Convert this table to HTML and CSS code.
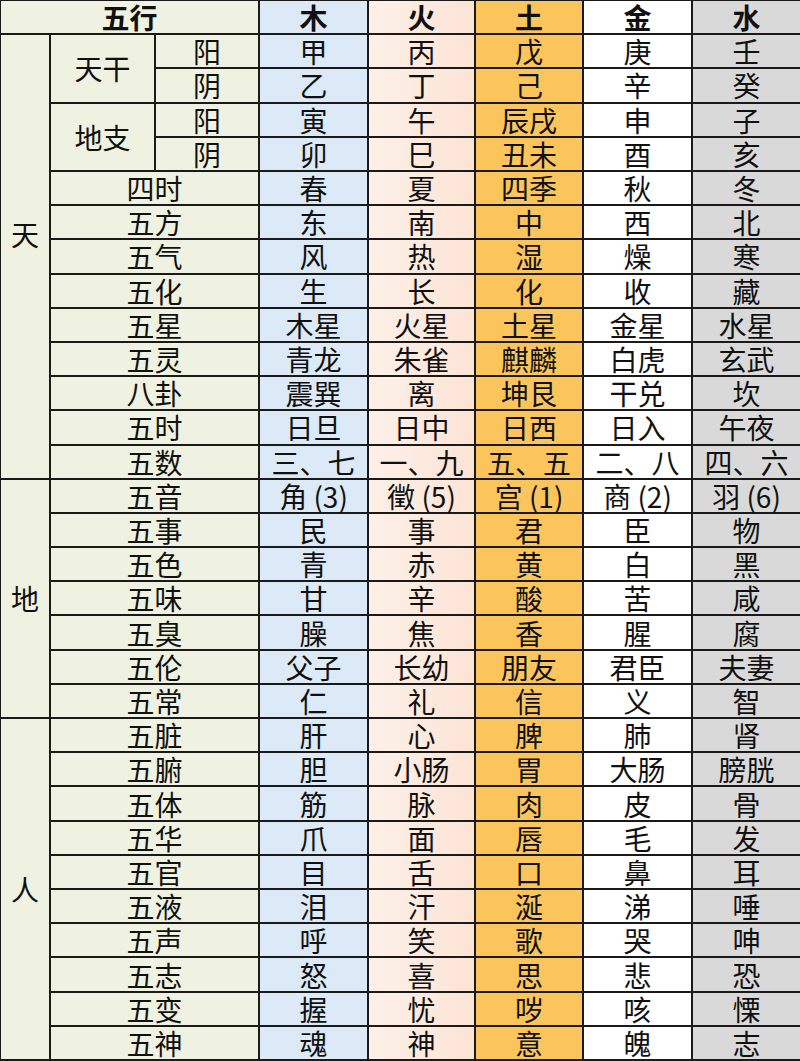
FILE: index.html
```html
<!DOCTYPE html>
<html lang="zh">
<head>
<meta charset="utf-8">
<title>五行</title>
<link rel="stylesheet" href="styles.css">
</head>
<body>
<div class="table">
  <div class="c lbl head span-c3">五行</div>
  <div class="c mu head">木</div>
  <div class="c huo head">火</div>
  <div class="c tu head">土</div>
  <div class="c jin head">金</div>
  <div class="c shui head">水</div>

  <div class="c lbl sec r13 sec-tian">天</div>
  <div class="c lbl r2">天干</div>
  <div class="c lbl">阳</div>
  <div class="c mu">甲</div><div class="c huo">丙</div><div class="c tu">戊</div><div class="c jin">庚</div><div class="c shui">壬</div>
  <div class="c lbl">阴</div>
  <div class="c mu">乙</div><div class="c huo">丁</div><div class="c tu">己</div><div class="c jin">辛</div><div class="c shui">癸</div>
  <div class="c lbl r2">地支</div>
  <div class="c lbl">阳</div>
  <div class="c mu">寅</div><div class="c huo">午</div><div class="c tu">辰戌</div><div class="c jin">申</div><div class="c shui">子</div>
  <div class="c lbl">阴</div>
  <div class="c mu">卯</div><div class="c huo">巳</div><div class="c tu">丑未</div><div class="c jin">酉</div><div class="c shui">亥</div>
  <div class="c lbl span-c2">四时</div>
  <div class="c mu">春</div><div class="c huo">夏</div><div class="c tu">四季</div><div class="c jin">秋</div><div class="c shui">冬</div>
  <div class="c lbl span-c2">五方</div>
  <div class="c mu">东</div><div class="c huo">南</div><div class="c tu">中</div><div class="c jin">西</div><div class="c shui">北</div>
  <div class="c lbl span-c2">五气</div>
  <div class="c mu">风</div><div class="c huo">热</div><div class="c tu">湿</div><div class="c jin">燥</div><div class="c shui">寒</div>
  <div class="c lbl span-c2">五化</div>
  <div class="c mu">生</div><div class="c huo">长</div><div class="c tu">化</div><div class="c jin">收</div><div class="c shui">藏</div>
  <div class="c lbl span-c2">五星</div>
  <div class="c mu">木星</div><div class="c huo">火星</div><div class="c tu">土星</div><div class="c jin">金星</div><div class="c shui">水星</div>
  <div class="c lbl span-c2">五灵</div>
  <div class="c mu">青龙</div><div class="c huo">朱雀</div><div class="c tu">麒麟</div><div class="c jin">白虎</div><div class="c shui">玄武</div>
  <div class="c lbl span-c2">八卦</div>
  <div class="c mu">震巽</div><div class="c huo">离</div><div class="c tu">坤艮</div><div class="c jin">干兑</div><div class="c shui">坎</div>
  <div class="c lbl span-c2">五时</div>
  <div class="c mu">日旦</div><div class="c huo">日中</div><div class="c tu">日西</div><div class="c jin">日入</div><div class="c shui">午夜</div>
  <div class="c lbl span-c2">五数</div>
  <div class="c mu">三、七</div><div class="c huo">一、九</div><div class="c tu">五、五</div><div class="c jin">二、八</div><div class="c shui">四、六</div>

  <div class="c lbl sec r7">地</div>
  <div class="c lbl span-c2">五音</div>
  <div class="c mu">角 (3)</div><div class="c huo">徵 (5)</div><div class="c tu">宫 (1)</div><div class="c jin">商 (2)</div><div class="c shui">羽 (6)</div>
  <div class="c lbl span-c2">五事</div>
  <div class="c mu">民</div><div class="c huo">事</div><div class="c tu">君</div><div class="c jin">臣</div><div class="c shui">物</div>
  <div class="c lbl span-c2">五色</div>
  <div class="c mu">青</div><div class="c huo">赤</div><div class="c tu">黄</div><div class="c jin">白</div><div class="c shui">黑</div>
  <div class="c lbl span-c2">五味</div>
  <div class="c mu">甘</div><div class="c huo">辛</div><div class="c tu">酸</div><div class="c jin">苦</div><div class="c shui">咸</div>
  <div class="c lbl span-c2">五臭</div>
  <div class="c mu">臊</div><div class="c huo">焦</div><div class="c tu">香</div><div class="c jin">腥</div><div class="c shui">腐</div>
  <div class="c lbl span-c2">五伦</div>
  <div class="c mu">父子</div><div class="c huo">长幼</div><div class="c tu">朋友</div><div class="c jin">君臣</div><div class="c shui">夫妻</div>
  <div class="c lbl span-c2">五常</div>
  <div class="c mu">仁</div><div class="c huo">礼</div><div class="c tu">信</div><div class="c jin">义</div><div class="c shui">智</div>

  <div class="c lbl sec r10">人</div>
  <div class="c lbl span-c2">五脏</div>
  <div class="c mu">肝</div><div class="c huo">心</div><div class="c tu">脾</div><div class="c jin">肺</div><div class="c shui">肾</div>
  <div class="c lbl span-c2">五腑</div>
  <div class="c mu">胆</div><div class="c huo">小肠</div><div class="c tu">胃</div><div class="c jin">大肠</div><div class="c shui">膀胱</div>
  <div class="c lbl span-c2">五体</div>
  <div class="c mu">筋</div><div class="c huo">脉</div><div class="c tu">肉</div><div class="c jin">皮</div><div class="c shui">骨</div>
  <div class="c lbl span-c2">五华</div>
  <div class="c mu">爪</div><div class="c huo">面</div><div class="c tu">唇</div><div class="c jin">毛</div><div class="c shui">发</div>
  <div class="c lbl span-c2">五官</div>
  <div class="c mu">目</div><div class="c huo">舌</div><div class="c tu">口</div><div class="c jin">鼻</div><div class="c shui">耳</div>
  <div class="c lbl span-c2">五液</div>
  <div class="c mu">泪</div><div class="c huo">汗</div><div class="c tu">涎</div><div class="c jin">涕</div><div class="c shui">唾</div>
  <div class="c lbl span-c2">五声</div>
  <div class="c mu">呼</div><div class="c huo">笑</div><div class="c tu">歌</div><div class="c jin">哭</div><div class="c shui">呻</div>
  <div class="c lbl span-c2">五志</div>
  <div class="c mu">怒</div><div class="c huo">喜</div><div class="c tu">思</div><div class="c jin">悲</div><div class="c shui">恐</div>
  <div class="c lbl span-c2">五变</div>
  <div class="c mu">握</div><div class="c huo">忧</div><div class="c tu">哕</div><div class="c jin">咳</div><div class="c shui">慄</div>
  <div class="c lbl span-c2">五神</div>
  <div class="c mu">魂</div><div class="c huo">神</div><div class="c tu">意</div><div class="c jin">魄</div><div class="c shui">志</div>
</div>
</body>
</html>
```
FILE: styles.css
```css
html, body {
  margin: 0;
  padding: 0;
  background: #ffffff;
}

.table {
  display: grid;
  width: 800px;
  height: 1061px;
  box-sizing: border-box;
  padding: 1px 0 2px 1px;
  gap: 2px;
  background: #1a1a1a;
  grid-template-columns: 48px 103px 102px 107px 105px 106px 107px 107px;
  grid-template-rows: repeat(31, 1fr);
  font-family: "Noto Sans CJK SC", "Noto Sans", sans-serif;
  font-size: 28px;
  color: #111111;
}

.c {
  display: flex;
  align-items: center;
  justify-content: center;
  line-height: 1;
  white-space: nowrap;
}

.head {
  font-weight: 700;
}

.lbl { background: #eff2e1; }
.mu { background: #dce9f6; }
.huo { background: linear-gradient(90deg, #fdf0e8 0%, #fce4d5 100%); }
.tu { background: #fbc55b; }
.jin { background: #ffffff; }
.shui { background: #d9d9d9; }

.span-c3 { grid-column: span 3; }
.span-c2 { grid-column: span 2; }
.r2 { grid-row: span 2; }
.r7 { grid-row: span 7; }
.r10 { grid-row: span 10; }
.r13 { grid-row: span 13; }

.sec-tian {
  padding-bottom: 44px;
}
```
